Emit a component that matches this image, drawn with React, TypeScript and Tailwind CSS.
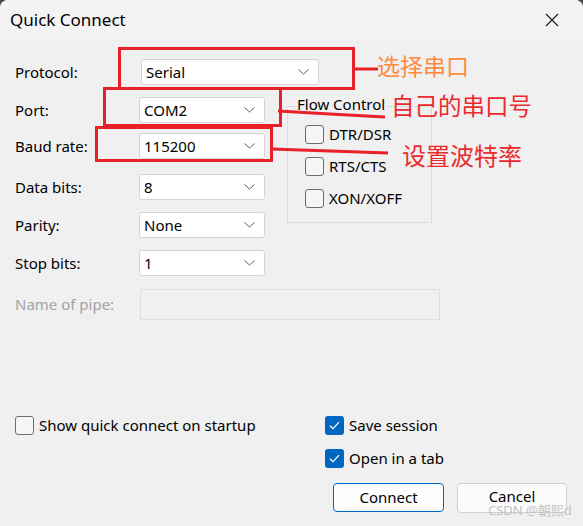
import React from 'react';

const font = { fontFamily: '"Noto Sans", "Noto Sans CJK SC", sans-serif' };

const Chevron: React.FC = () => (
    <svg width="11" height="6" viewBox="0 0 11 6" fill="none" stroke="#5f5f5f" strokeWidth="1">
        <path d="M0.5 0.5 L5.5 5 L10.5 0.5" />
    </svg>
);

const Select: React.FC<{ value: string; width: string }> = ({ value, width }) => (
    <div className={`${width} h-[26px] bg-white border border-[#d4d4d4] rounded-[3px] flex items-center justify-between pl-[4px] pr-[9px]`}>
        <span className="text-[15px] text-black leading-none">{value}</span>
        <Chevron />
    </div>
);

const CheckBox: React.FC<{ checked?: boolean; label: string }> = ({ checked, label }) => (
    <div className="flex items-center gap-[5px]">
        {checked ? (
            <div className="w-[19px] h-[19px] rounded-[3px] bg-[#0067c0] flex items-center justify-center">
                <svg width="11" height="9" viewBox="0 0 11 9" fill="none" stroke="white" strokeWidth="1.2">
                    <path d="M1 4.8 L4 7.6 L10 1.2" />
                </svg>
            </div>
        ) : (
            <div className="w-[19px] h-[19px] rounded-[3px] border border-[#6f6f6f] bg-[#f6f6f6]" />
        )}
        <span className="text-[15px] text-black leading-none">{label}</span>
    </div>
);

const Row: React.FC<{ label: string; children: React.ReactNode; className?: string; disabled?: boolean }> = ({ label, children, className, disabled }) => (
    <div className={`flex items-center ${className ?? ''}`}>
        <div className={`w-[124px] text-[15px] leading-none ${disabled ? 'text-[#a3a3a3]' : 'text-black'}`}>{label}</div>
        {children}
    </div>
);

export default function App() {
    return (
        <div className="w-[583px] h-[526px] bg-[#4a4a4a] overflow-hidden" style={font}>
            <div className="relative w-full h-full bg-[#f0f0f0] rounded-tl-[8px] rounded-tr-[8px] overflow-hidden">
                {/* title bar */}
                <div className="h-[40px] bg-[#f3f3f3] flex items-center justify-between pl-[10px] pr-[24px]">
                    <span className="text-[17px] text-black">Quick Connect</span>
                    <svg width="14" height="14" viewBox="0 0 14 14" stroke="#1a1a1a" strokeWidth="1.1">
                        <path d="M1 1 L13 13 M13 1 L1 13" />
                    </svg>
                </div>

                <div className="pl-[15px]">
                    <Row label="Protocol:" className="mt-[19px]">
                        <div className="ml-[2px]"><Select value="Serial" width="w-[178px]" /></div>
                    </Row>

                    <div className="flex mt-[12px]">
                        <div className="flex flex-col">
                            <Row label="Port:"><Select value="COM2" width="w-[126px]" /></Row>
                            <Row label="Baud rate:" className="mt-[10px]"><Select value="115200" width="w-[126px]" /></Row>
                            <Row label="Data bits:" className="mt-[15px]"><Select value="8" width="w-[126px]" /></Row>
                            <Row label="Parity:" className="mt-[12px]"><Select value="None" width="w-[126px]" /></Row>
                            <Row label="Stop bits:" className="mt-[12px]"><Select value="1" width="w-[126px]" /></Row>
                        </div>
                        <div className="relative ml-[22px] mt-[9px] w-[145px] h-[117px] border border-[#dcdcdc]">
                            <span className="absolute left-[8px] top-[-10px] px-[1px] bg-[#f0f0f0] text-[15px] leading-none text-black">Flow Control</span>
                            <div className="flex flex-col gap-[13px] pl-[17px] pt-[18px]">
                                <CheckBox label="DTR/DSR" />
                                <CheckBox label="RTS/CTS" />
                                <CheckBox label="XON/XOFF" />
                            </div>
                        </div>
                    </div>

                    <Row label="Name of pipe:" className="mt-[13px]" disabled>
                        <div className="ml-[1px] w-[300px] h-[31px] border border-[#dedede] bg-[#f0f0f0]" />
                    </Row>

                    <div className="flex mt-[96px]">
                        <div className="w-[310px]">
                            <CheckBox label="Show quick connect on startup" />
                        </div>
                        <div className="flex flex-col gap-[14px]">
                            <CheckBox checked label="Save session" />
                            <CheckBox checked label="Open in a tab" />
                        </div>
                    </div>

                    <div className="flex justify-end gap-[13px] pr-[16px] mt-[15px]">
                        <button className="w-[111px] h-[29px] rounded-[4px] border border-[#0067c0] bg-[#fdfdfd] text-[15px] text-black">Connect</button>
                        <button className="w-[110px] h-[30px] rounded-[4px] border border-[#d0d0d0] bg-[#fbfbfb] text-[15px] text-black pb-[3px]">Cancel</button>
                    </div>
                </div>

                {/* annotations */}
                <svg className="absolute left-0 top-0 pointer-events-none" width="583" height="526" fill="none" stroke="#e8202a" strokeWidth="3">
                    <rect x="119.5" y="48.5" width="234" height="40" />
                    <rect x="104.5" y="88.5" width="176" height="37" />
                    <rect x="96.5" y="127.5" width="175" height="33" />
                    <path d="M354 69 L378 69" />
                    <path d="M278 111 L330 114 L385 117" />
                    <path d="M271 149 L330 151 L388 153" />
                </svg>
                <span className="absolute left-[377px] top-[54px] text-[23px] leading-none text-[#ff8a3d]" style={{ fontFamily: '"Noto Sans CJK SC", sans-serif' }}>选择串口</span>
                <span className="absolute left-[391px] top-[94px] text-[23.5px] leading-none text-[#ec2a2e]" style={{ fontFamily: '"Noto Sans CJK SC", sans-serif' }}>自己的串口号</span>
                <span className="absolute left-[402px] top-[143px] text-[24px] leading-none text-[#ec2a2e]" style={{ fontFamily: '"Noto Sans CJK SC", sans-serif' }}>设置波特率</span>
                <span className="absolute left-[488px] top-[504px] text-[13px] leading-none text-[#bdbdbd] opacity-90" style={{ fontFamily: '"Noto Sans", "Noto Sans CJK SC", sans-serif' }}>CSDN @朝熙d</span>
            </div>
        </div>
    );
}
